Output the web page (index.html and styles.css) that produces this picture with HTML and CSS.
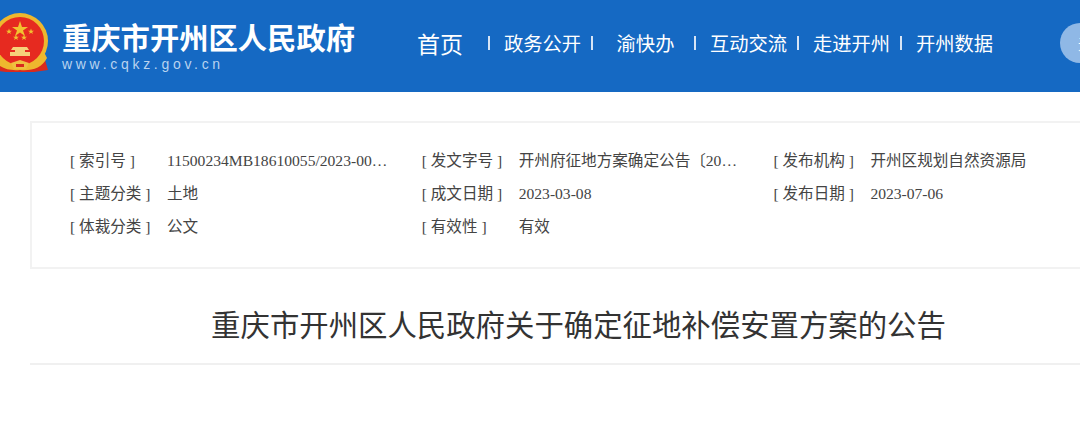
FILE: index.html
```html
<!DOCTYPE html>
<html lang="zh-CN">
<head>
    <meta charset="UTF-8">
    <title>重庆市开州区人民政府关于确定征地补偿安置方案的公告</title>
    <link rel="stylesheet" href="styles.css">
</head>
<body>
    <div class="header">
        <svg class="emblem" viewBox="-8 13 56 60" width="56" height="60">
            <path d="M-5 60 L-8 70 L6 72 H34 L48 70 L45 60 Z" fill="#d92a1e"/>
            <circle cx="20" cy="41" r="28" fill="#eeb82e"/>
            <circle cx="20" cy="41" r="24" fill="#e62a20"/>
            <polygon points="20,21 22,27 28,27 23,30.5 25,36 20,32.5 15,36 17,30.5 12,27 18,27" fill="#f2c230"/>
            <polygon points="9,28.5 9.8,30.7 12,30.7 10.2,32 10.9,34 9,32.8 7.1,34 7.8,32 6,30.7 8.2,30.7" fill="#f2c230"/>
            <polygon points="31,28.5 31.8,30.7 34,30.7 32.2,32 32.9,34 31,32.8 29.1,34 29.8,32 28,30.7 30.2,30.7" fill="#f2c230"/>
            <polygon points="16,34.5 16.8,36.7 19,36.7 17.2,38 17.9,40 16,38.8 14.1,40 14.8,38 13,36.7 15.2,36.7" fill="#f2c230"/>
            <polygon points="24,34.5 24.8,36.7 27,36.7 25.2,38 25.9,40 24,38.8 22.1,40 22.8,38 21,36.7 23.2,36.7" fill="#f2c230"/>
            <path d="M13 47 H27 L29 50 H25 V52 H30 V56 H10 V52 H15 V50 H11 Z" fill="#f6d27a"/>
            <path d="M-4 52 C0 62 10 66 20 64 C30 66 40 62 44 52 L47 58 C42 68 32 71 20 70 C8 71 -2 68 -7 58 Z" fill="#eeb82e"/>
            <path d="M11 63 L20 60 L29 63 L26 69 H14 Z" fill="#f0c040"/>
            <rect x="16" y="64" width="8" height="3" fill="#d92a1e"/>
        </svg>
        <div class="brand">
            <div class="brand-name">重庆市开州区人民政府</div>
            <div class="brand-url">www.cqkz.gov.cn</div>
        </div>
        <div class="nav">
            <a class="nav-home">首页</a>
            <a class="nav-item"><span>政务公开</span></a>
            <a class="nav-item"><span>渝快办</span></a>
            <a class="nav-item"><span>互动交流</span></a>
            <a class="nav-item"><span>走进开州</span></a>
            <a class="nav-item"><span>开州数据</span></a>
        </div>
        <div class="round-btn">无障碍</div>
    </div>

    <div class="content">
        <div class="meta">
            <div class="meta-row">
                <div class="meta-cell"><span class="label">[ 索引号 ]</span><span class="value">11500234MB18610055/2023-00…</span></div>
                <div class="meta-cell"><span class="label">[ 发文字号 ]</span><span class="value">开州府征地方案确定公告〔20…</span></div>
                <div class="meta-cell"><span class="label">[ 发布机构 ]</span><span class="value">开州区规划自然资源局</span></div>
            </div>
            <div class="meta-row">
                <div class="meta-cell"><span class="label">[ 主题分类 ]</span><span class="value">土地</span></div>
                <div class="meta-cell"><span class="label">[ 成文日期 ]</span><span class="value">2023-03-08</span></div>
                <div class="meta-cell"><span class="label">[ 发布日期 ]</span><span class="value">2023-07-06</span></div>
            </div>
            <div class="meta-row">
                <div class="meta-cell"><span class="label">[ 体裁分类 ]</span><span class="value">公文</span></div>
                <div class="meta-cell"><span class="label">[ 有效性 ]</span><span class="value">有效</span></div>
            </div>
        </div>
        <h1 class="title">重庆市开州区人民政府关于确定征地补偿安置方案的公告</h1>
    </div>
</body>
</html>
```

FILE: styles.css
```css
html, body {
    margin: 0;
    height: 100%;
    overflow: hidden;
}
body {
    width: 1080px;
    background-color: #ffffff;
    color: #333333;
    font-family: "Liberation Serif", "Noto Sans CJK SC", serif;
}
.header {
    display: flex;
    height: 92px;
    background-color: #1569c3;
    color: #ffffff;
    overflow: hidden;
}
.emblem {
    flex: none;
    margin: 13px 14px 0 -8px;
}
.brand {
    flex: none;
    width: 340px;
    padding-top: 18px;
    font-family: "Noto Sans CJK SC", sans-serif;
}
.brand-name {
    font-size: 29.3px;
    font-weight: 700;
    line-height: 36px;
    white-space: nowrap;
}
.brand-url {
    margin-top: 2px;
    font-family: "Liberation Sans", sans-serif;
    font-size: 14px;
    line-height: 16px;
    letter-spacing: 3.7px;
    color: #b9d3ef;
}
.nav {
    display: flex;
    align-items: center;
    flex: none;
    width: 643px;
    height: 85px;
    margin-left: 15px;
    font-family: "Noto Sans CJK SC", sans-serif;
}
.nav-home {
    width: 71px;
    font-size: 23px;
}
.nav-item {
    display: flex;
    align-items: center;
    width: 103px;
    font-size: 19.3px;
    white-space: nowrap;
}
.nav-item::before {
    content: "";
    width: 2px;
    height: 14px;
    margin-right: 14px;
    background-color: #d6e4f5;
}
.nav-item span {
    width: 77px;
    text-align: center;
}
.round-btn {
    flex: none;
    width: 60px;
    height: 40px;
    padding-left: 18px;
    margin-top: 23px;
    border-radius: 20px;
    background-color: #8fb8e6;
    font-family: "Noto Sans CJK SC", sans-serif;
    font-size: 14px;
    line-height: 40px;
    white-space: nowrap;
}
.content {
    width: 1097px;
    margin: 29px 0 0 30px;
}
.meta {
    box-sizing: border-box;
    height: 148px;
    padding: 21px 38px;
    border: 2px solid #f2f2f2;
}
.meta-row {
    display: flex;
    height: 33px;
    font-size: 15.6px;
    line-height: 33px;
    color: #444444;
}
.meta-cell {
    display: flex;
    width: 351.7px;
    flex: none;
}
.label {
    width: 97px;
    flex: none;
    white-space: nowrap;
}
.value {
    white-space: nowrap;
}
.title {
    margin: 0;
    padding: 35px 0 15px;
    border-bottom: 2px solid #f0f0f0;
    font-size: 29.4px;
    font-weight: 400;
    line-height: 44px;
    text-align: center;
    color: #333333;
}
```
